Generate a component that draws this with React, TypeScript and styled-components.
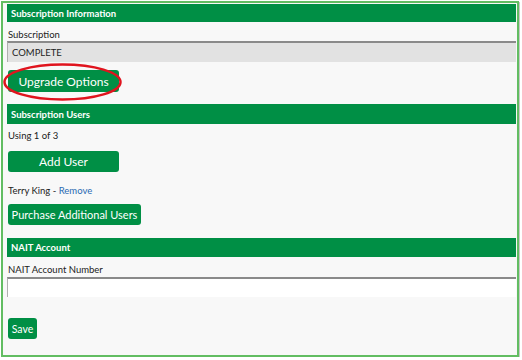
import styled, { createGlobalStyle } from "styled-components";

const Global = createGlobalStyle`
  body {
    margin: 0;
    background: #fff;
    font-family: Lato, "Liberation Sans", sans-serif;
  }
`

const Frame = styled.div`
  box-sizing: border-box;
  margin: 1px 0 0 1px;
  width: 518px;
  height: 356px;
  border: 2px solid #62bd62;
  background: #f8f8f8;
  box-shadow: 1px 1px 0 #c8c8c8;
  padding: 1px 1px 0 4px;
  display: flex;
  flex-direction: column;
  align-items: flex-start;
`
const SectionHead = styled.div<{ $h: number; $mt?: number }>`
  align-self: stretch;
  height: ${p => p.$h}px;
  margin-top: ${p => p.$mt ?? 0}px;
  background: #008f45;
  color: #fff;
  font-size: 9.5px;
  font-weight: 700;
  display: flex;
  align-items: center;
  padding-left: 4px;
  white-space: nowrap;
`
const Label = styled.div<{ $mt: number }>`
  margin: ${p => p.$mt}px 0 0 1px;
  font-size: 9.5px;
  color: #222;
  line-height: 12px;
`
const Field = styled.div<{ $bg: string; $h: number; $mt: number }>`
  align-self: stretch;
  box-sizing: border-box;
  height: ${p => p.$h}px;
  margin-top: ${p => p.$mt}px;
  background: ${p => p.$bg};
  border-top: 2px solid #8a8a8a;
  border-left: 1px solid #b0b0b0;
  font-size: 9.5px;
  color: #222;
  display: flex;
  align-items: center;
  padding-left: 4px;
`
const Btn = styled.button<{ $w: number; $h?: number; $mt: number; $fs?: number }>`
  width: ${p => p.$w}px;
  height: ${p => p.$h ?? 22}px;
  margin: ${p => p.$mt}px 0 0 1px;
  background: #008f45;
  color: #fff;
  border: none;
  border-radius: 3px;
  font-family: inherit;
  font-size: ${p => p.$fs ?? 12}px;
  white-space: nowrap;
  padding: 0;
  position: relative;
  cursor: pointer;
`
const Circled = styled.svg`
  position: absolute;
  left: -5px;
  top: -7px;
  pointer-events: none;
`
const UserLine = styled.div`
  margin: 13px 0 0 1px;
  font-size: 9.5px;
  line-height: 12px;
  color: #222;
  a { color: #2a6ab3; text-decoration: none; }
`

export default function App() {
  return (
    <>
      <Global />
      <Frame>
        <SectionHead $h={18}>Subscription Information</SectionHead>
        <Label $mt={7}>Subscription</Label>
        <Field $bg="#e2e2e2" $h={21} $mt={0}>COMPLETE</Field>
        <Btn $w={111} $mt={8}>
          Upgrade Options
          <Circled width="122" height="38" viewBox="0 0 122 38">
            <ellipse cx="59.5" cy="19" rx="58" ry="17.5" fill="none" stroke="#e0141e" strokeWidth="2.5" />
          </Circled>
        </Btn>
        <SectionHead $h={20} $mt={12}>Subscription Users</SectionHead>
        <Label $mt={6}>Using 1 of 3</Label>
        <Btn $w={111} $h={21} $mt={9}>Add User</Btn>
        <UserLine>Terry King - <a href="#">Remove</a></UserLine>
        <Btn $w={133} $h={21} $mt={7} $fs={11}>Purchase Additional Users</Btn>
        <SectionHead $h={19} $mt={13}>NAIT Account</SectionHead>
        <Label $mt={7}>NAIT Account Number</Label>
        <Field $bg="#fff" $h={20} $mt={1} />
        <Btn $w={29} $h={21} $mt={21} $fs={10.5}>Save</Btn>
      </Frame>
    </>
  )
}
